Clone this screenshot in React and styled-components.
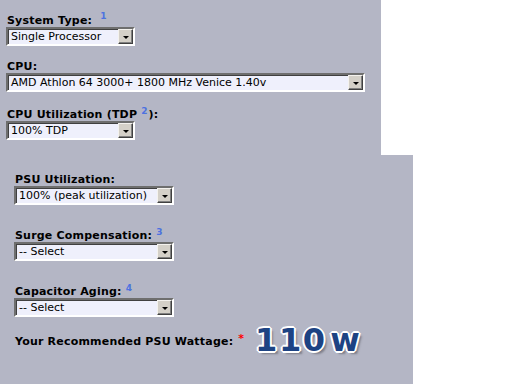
import React from 'react';
import styled, { createGlobalStyle } from 'styled-components';

const GlobalStyle = createGlobalStyle`
  html, body {
    margin: 0;
    padding: 0;
    background: #ffffff;
  }
  body {
    font-family: "DejaVu Sans", Verdana, sans-serif;
    color: #000;
  }
`;

const Page = styled.div`
  width: 512px;
  height: 384px;
  overflow: hidden;
`;

const Panel = styled.div`
  box-sizing: border-box;
  width: ${(p) => p.$width}px;
  height: ${(p) => p.$height}px;
  padding: ${(p) => p.$padTop}px 0 0 ${(p) => p.$padLeft}px;
  background: #b4b6c5;
`;

const Field = styled.div`
  margin-top: ${(p) => p.$gap || 0}px;
`;

const Label = styled.div`
  font-size: 11px;
  line-height: 12px;
  font-weight: bold;
  letter-spacing: 0.2px;
  padding-left: 1px;
  white-space: nowrap;
`;

const Note = styled.span`
  position: relative;
  top: ${(p) => p.$lift || -4}px;
  margin-left: ${(p) => p.$space || 0}px;
  margin-right: ${(p) => p.$after || 0}px;
  font-size: 9px;
  font-weight: bold;
  letter-spacing: 0;
  color: #4d72e0;
`;

const SelectBox = styled.div`
  box-sizing: border-box;
  display: flex;
  align-items: center;
  width: ${(p) => p.$width}px;
  height: 19px;
  border-style: solid;
  border-width: 2px;
  border-color: #6e6e6e #ffffff #ffffff #6e6e6e;
  box-shadow: inset 1px 1px 0 #404040;
  background: #eff0fc;
  font-size: 11px;
  line-height: 15px;
  cursor: default;
`;

const SelectText = styled.span`
  flex: 1;
  padding-left: 3px;
  white-space: nowrap;
  overflow: hidden;
`;

const ArrowButton = styled.span`
  box-sizing: border-box;
  display: flex;
  align-items: center;
  justify-content: center;
  width: 15px;
  height: 15px;
  background: #d4d0c8;
  border-style: solid;
  border-width: 1px;
  border-color: #f4f2ee #404040 #404040 #f4f2ee;
  box-shadow: inset -1px -1px 0 #808080;
`;

const Triangle = styled.span`
  width: 0;
  height: 0;
  border-left: 3px solid transparent;
  border-right: 3px solid transparent;
  border-top: 3px solid #000;
  margin-top: 1px;
`;

const Select = ({ width, children }) => (
  <SelectBox $width={width}>
    <SelectText>{children}</SelectText>
    <ArrowButton>
      <Triangle />
    </ArrowButton>
  </SelectBox>
);

const ResultRow = styled.div`
  display: flex;
  align-items: flex-start;
  margin-top: 19px;
`;

const Required = styled.span`
  margin-left: 5px;
  margin-top: -4px;
  font-size: 11px;
  font-weight: bold;
  color: #ff0000;
`;

const Wattage = styled.div`
  margin-left: 11px;
  margin-top: -14px;
  font-family: "DejaVu Sans", sans-serif;
  font-size: 32px;
  line-height: 36px;
  font-weight: bold;
  letter-spacing: 1.6px;
  word-spacing: -9px;
  color: #1d4383;
  text-shadow:
    -2px 0 0 #fff, 2px 0 0 #fff, 0 -2px 0 #fff, 0 2px 0 #fff,
    -1px -1px 0 #fff, 1px -1px 0 #fff, -1px 1px 0 #fff, 1px 1px 0 #fff,
    3px 3px 2px rgba(80, 80, 90, 0.55);
`;

export default function App() {
  return (
    <Page>
      <GlobalStyle />
      <Panel $width={381} $height={155} $padTop={15} $padLeft={6}>
        <Field>
          <Label>
            System Type:<Note $space={8} $lift={-5}>1</Note>
          </Label>
          <Select width={129}>Single Processor</Select>
        </Field>
        <Field $gap={15}>
          <Label>CPU:</Label>
          <Select width={359}>AMD Athlon 64 3000+ 1800 MHz Venice 1.40v</Select>
        </Field>
        <Field $gap={17}>
          <Label>
            CPU Utilization (TDP <Note $lift={-4} $after={1}>2</Note>):
          </Label>
          <Select width={129}>100% TDP</Select>
        </Field>
      </Panel>
      <Panel $width={413} $height={229} $padTop={19} $padLeft={14}>
        <Field>
          <Label>PSU Utilization:</Label>
          <Select width={160}>100% (peak utilization)</Select>
        </Field>
        <Field $gap={25}>
          <Label>
            Surge Compensation:<Note $space={4} $lift={-4}>3</Note>
          </Label>
          <Select width={160}>-- Select</Select>
        </Field>
        <Field $gap={25}>
          <Label>
            Capacitor Aging:<Note $space={4} $lift={-4}>4</Note>
          </Label>
          <Select width={160}>-- Select</Select>
        </Field>
        <ResultRow>
          <Label>Your Recommended PSU Wattage:</Label>
          <Required>*</Required>
          <Wattage>110 w</Wattage>
        </ResultRow>
      </Panel>
    </Page>
  );
}
